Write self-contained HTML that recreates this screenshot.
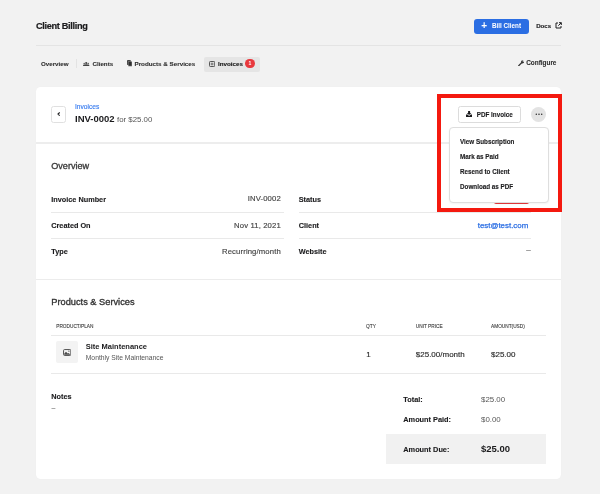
<!DOCTYPE html>
<html><head><meta charset="utf-8">
<style>
*{box-sizing:border-box;margin:0;padding:0}
html,body{width:600px;height:494px;overflow:hidden;background:#f2f2f2;font-family:"Liberation Sans",sans-serif;color:#1b1b1d}
.a{position:absolute;white-space:nowrap;line-height:1}
.b{font-weight:bold}
.g{color:#555}
.m{-webkit-text-stroke:.25px currentColor}
.hl{position:absolute;height:1px;background:#e9e9e9}
.t{font-size:6.25px;font-weight:bold;color:#2e2e2e;-webkit-text-stroke:.1px currentColor}
.l{font-size:7.3px;font-weight:bold;-webkit-text-stroke:.12px currentColor}
.v{font-size:7.7px;letter-spacing:.13px;color:#444;-webkit-text-stroke:.15px currentColor}
.th{font-size:4.75px;color:#3a3a3a;-webkit-text-stroke:.1px currentColor}
.td{font-size:8px;color:#2c2c2c;-webkit-text-stroke:.15px currentColor}
.dd{font-size:6.3px;font-weight:bold;left:460px;-webkit-text-stroke:.12px currentColor}
.wrap{position:absolute;left:0;top:0;width:600px;height:494px;will-change:transform}
</style></head><body><div class="wrap">
<div class="a b" style="left:36px;top:21.8px;font-size:9.2px;letter-spacing:-.33px;-webkit-text-stroke:.2px #1b1b1d">Client Billing</div>
<div class="a" style="left:474px;top:18.7px;width:55px;height:15.4px;background:#2b6ee3;border-radius:3px"></div>
<div class="a b" style="left:481.3px;top:20.6px;font-size:10px;color:#fff;line-height:10px">+</div>
<div class="a b" style="left:492px;top:23.2px;font-size:6.3px;color:#fff">Bill Client</div>
<div class="a b" style="left:536.2px;top:23.2px;font-size:6.1px;-webkit-text-stroke:.15px #1b1b1d">Docs</div>
<svg class="a" style="left:554.8px;top:22px" width="7" height="7" viewBox="0 0 7 7"><path d="M3 1H1v5h5V4M4 .7h2.3V3M6.2.8L3.3 3.7" fill="none" stroke="#1d1d1f" stroke-width="1"/></svg>
<div class="hl" style="left:36px;top:45px;width:525px;background:#e4e4e4"></div>

<div class="a t" style="left:41px;top:61px;font-size:6.2px">Overview</div>
<div class="a" style="left:76px;top:59px;width:1px;height:9px;background:#e3e3e3"></div>
<svg class="a" style="left:83.4px;top:61.9px" width="6.4" height="4.2" viewBox="0 0 6.4 4.2"><circle cx="3.2" cy="1.05" r="1.05" fill="#444"/><circle cx="1.2" cy="1.5" r=".75" fill="#555"/><circle cx="5.2" cy="1.5" r=".75" fill="#555"/><path d="M0 4.2c0-1.3.5-1.8 1.4-1.8.3 0 .5.1.7.2.3-.3.7-.4 1.1-.4s.8.1 1.1.4c.2-.1.4-.2.7-.2.9 0 1.4.5 1.4 1.8z" fill="#444"/></svg>
<div class="a t" style="left:92.5px;top:61px;font-size:6.2px">Clients</div>
<svg class="a" style="left:127px;top:60.4px" width="5" height="6.2" viewBox="0 0 5 6.2"><rect x="0" y="0" width="3.8" height="4.9" rx=".5" fill="#3a3a3a"/><rect x="1.2" y="1.3" width="3.8" height="4.9" rx=".5" fill="#2e2e2e" stroke="#f2f2f2" stroke-width=".35"/></svg>
<div class="a t" style="left:134.5px;top:61px">Products &amp; Services</div>
<div class="a" style="left:203.75px;top:57px;width:55.75px;height:14.75px;background:#e5e5e5;border-radius:2px"></div>
<svg class="a" style="left:208.8px;top:60.5px" width="6.2" height="6" viewBox="0 0 6.2 6"><rect x=".45" y=".45" width="5.3" height="5.1" rx="1" fill="none" stroke="#3c3c3c" stroke-width=".9"/><path d="M1.8 2.3h2.6M1.8 3.7h2.6" stroke="#3c3c3c" stroke-width=".7"/></svg>
<div class="a t" style="left:218px;top:61px;color:#111">Invoices</div>
<div class="a" style="left:245px;top:58.5px;width:10px;height:9.8px;border-radius:5px;background:#e8383d"></div>
<div class="a b" style="left:248.6px;top:61px;font-size:5px;color:#fff">1</div>
<svg class="a" style="left:517.6px;top:60px" width="6.4" height="6.4" viewBox="0 0 7 7"><path d="M.8 6.2L4 3" stroke="#333" stroke-width="1.4" stroke-linecap="round"/><circle cx="5" cy="2" r="1.7" fill="#333"/><circle cx="5.9" cy="1.1" r=".9" fill="#f3f3f3"/></svg>
<div class="a t" style="left:526.25px;top:60px;font-size:6.4px">Configure</div>

<!-- card -->
<div class="a" style="left:36px;top:86.5px;width:525.2px;height:392.3px;background:#fff;border-radius:4.5px;box-shadow:0 0 1px rgba(0,0,0,.06)"></div>
<div class="a" style="left:51.2px;top:106.2px;width:14.5px;height:16.5px;border:1px solid #e0e0e0;border-radius:2.5px;background:#fff"></div>
<svg class="a" style="left:56.8px;top:112.3px" width="3.4" height="4.2" viewBox="0 0 3.4 4.2"><path d="M2.7.5L1 2.1l1.7 1.6" fill="none" stroke="#1b1b1d" stroke-width="1.1"/></svg>
<div class="a" style="left:75px;top:104.1px;font-size:6.6px;color:#3c7ff0;-webkit-text-stroke:.15px #3c7ff0">Invoices</div>
<div class="a b" style="left:75px;top:114px;font-size:9.5px">INV-0002</div>
<div class="a g" style="left:117px;top:115.7px;font-size:7.85px">for $25.00</div>
<div class="hl" style="left:36px;top:141.8px;width:525.2px;height:1.9px;background:#ededed"></div>

<div class="a" style="left:458.25px;top:106.25px;width:62.5px;height:16.25px;border:1px solid #dcdcdc;border-radius:2.5px;background:#fff"></div>
<svg class="a" style="left:466px;top:111.4px" width="6.2" height="6.1" viewBox="0 0 6.2 6.1"><path d="M2.1 0h2v1.9h1.3L3.1 4.1.8 1.9h1.3z" fill="#1b1b1d"/><path d="M0 3.6h1.5l1.6 1.3 1.6-1.3h1.5v2.5H0z" fill="#1b1b1d"/></svg>
<div class="a b" style="left:476.75px;top:111.8px;font-size:6.3px;-webkit-text-stroke:.12px #1b1b1d">PDF Invoice</div>
<div class="a" style="left:531.25px;top:107.4px;width:14.5px;height:14.5px;border-radius:8px;background:#e3e3e3"></div>
<svg class="a" style="left:534.5px;top:113px" width="8" height="3" viewBox="0 0 8 3"><circle cx="1.3" cy="1.3" r=".72" fill="#222"/><circle cx="4" cy="1.3" r=".72" fill="#222"/><circle cx="6.7" cy="1.3" r=".72" fill="#222"/></svg>

<div class="a" style="left:51.25px;top:161.6px;font-size:9.1px;color:#3a3a3a;-webkit-text-stroke:.33px #3a3a3a">Overview</div>

<div class="a l" style="left:51.25px;top:195.5px">Invoice Number</div>
<div class="a v" style="right:319.2px;top:195.3px">INV-0002</div>
<div class="a l" style="left:298.75px;top:195.5px">Status</div>
<div class="hl" style="left:51px;top:212px;width:232.5px"></div>
<div class="hl" style="left:299px;top:212px;width:231.75px"></div>
<div class="a l" style="left:51.25px;top:221.6px">Created On</div>
<div class="a v" style="right:319.2px;top:221.5px">Nov 11, 2021</div>
<div class="a l" style="left:298.75px;top:221.6px">Client</div>
<div class="a m" style="right:71.75px;top:221.5px;font-size:7.9px;color:#2b6ee3">test@test.com</div>
<div class="hl" style="left:51px;top:238px;width:232.5px"></div>
<div class="hl" style="left:299px;top:238px;width:231.75px"></div>
<div class="a l" style="left:51.25px;top:247.6px">Type</div>
<div class="a v" style="right:319.2px;top:247.6px">Recurring/month</div>
<div class="a l" style="left:298.75px;top:247.6px">Website</div>
<div class="a" style="left:526.2px;top:245.6px;font-size:8px;color:#444;-webkit-text-stroke:.2px #444">–</div>
<div class="hl" style="left:36px;top:279px;width:525.2px;background:#ececec"></div>

<div class="a" style="left:51.25px;top:297.6px;font-size:9.25px;color:#333;-webkit-text-stroke:.33px #333">Products &amp; Services</div>
<div class="a th" style="left:56.25px;top:325.2px">PRODUCT/PLAN</div>
<div class="a th" style="left:366.1px;top:325.2px">QTY</div>
<div class="a th" style="left:415.8px;top:325.2px">UNIT PRICE</div>
<div class="a th" style="left:491px;top:325.2px">AMOUNT(USD)</div>
<div class="hl" style="left:51px;top:335px;width:495px"></div>
<div class="a" style="left:56.25px;top:341.2px;width:21.5px;height:21.6px;background:#f3f3f3;border-radius:2px"></div>
<svg class="a" style="left:62.8px;top:348.5px" width="8.4" height="7" viewBox="0 0 8.4 7"><rect x=".55" y=".55" width="7.3" height="5.9" rx="1" fill="none" stroke="#4a4a4a" stroke-width=".95"/><path d="M1.2 5.8V4.7l1.8-1.9 1.7 1.7.8-.6 1.6 1.4v.5z" fill="#4a4a4a"/><circle cx="5.9" cy="2.2" r=".6" fill="#4a4a4a"/></svg>
<div class="a b" style="left:85.75px;top:342.6px;font-size:7.5px">Site Maintenance</div>
<div class="a g" style="left:85.75px;top:354.8px;font-size:6.75px">Monthly Site Maintenance</div>
<div class="a td" style="left:366.3px;top:350.7px">1</div>
<div class="a td" style="left:415.8px;top:350.7px">$25.00/month</div>
<div class="a td" style="left:491px;top:350.7px">$25.00</div>
<div class="hl" style="left:51px;top:373px;width:495px"></div>

<div class="a l" style="left:51.25px;top:392.8px">Notes</div>
<div class="a g" style="left:51.5px;top:404.2px;font-size:7px">–</div>
<div class="a l" style="left:403.3px;top:396px;font-size:7.35px">Total:</div>
<div class="a" style="left:481px;top:395.6px;font-size:7.9px;color:#575757">$25.00</div>
<div class="a l" style="left:403.3px;top:416px;font-size:7.35px">Amount Paid:</div>
<div class="a" style="left:481px;top:415.6px;font-size:7.9px;color:#575757">$0.00</div>
<div class="a" style="left:386px;top:434px;width:160px;height:30px;background:#f1f1f1"></div>
<div class="a l" style="left:403.3px;top:446px;font-size:7.35px">Amount Due:</div>
<div class="a b" style="left:481px;top:444px;font-size:9.5px">$25.00</div>

<!-- status badge peeking -->
<div class="a" style="left:493.5px;top:193px;width:35.6px;height:10.75px;background:#e8383d;border-radius:2px"></div>
<!-- dropdown -->
<div class="a" style="left:449px;top:126.6px;width:99.6px;height:76px;background:#fff;border:1px solid #dedede;border-radius:4px;box-shadow:0 1px 2px rgba(0,0,0,.05)"></div>
<div class="a dd" style="top:139.2px">View Subscription</div>
<div class="a dd" style="top:154.2px">Mark as Paid</div>
<div class="a dd" style="top:169.2px">Resend to Client</div>
<div class="a dd" style="top:184.2px">Download as PDF</div>
<!-- red highlight -->
<div class="a" style="left:436.75px;top:94.25px;width:125px;height:117.5px;border:4.5px solid #f4190f"></div>
</div></body></html>
